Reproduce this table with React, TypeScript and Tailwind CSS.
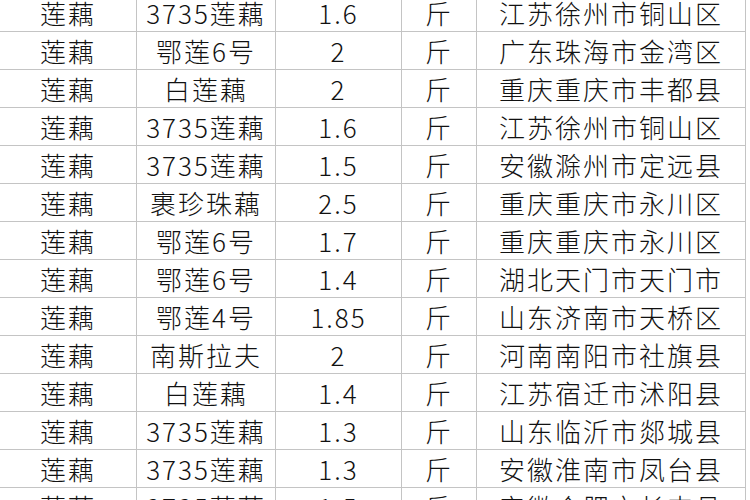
const rows: [string, string, string, string, string][] = [
  ['莲藕', '3735莲藕', '1.6', '斤', '江苏徐州市铜山区'],
  ['莲藕', '鄂莲6号', '2', '斤', '广东珠海市金湾区'],
  ['莲藕', '白莲藕', '2', '斤', '重庆重庆市丰都县'],
  ['莲藕', '3735莲藕', '1.6', '斤', '江苏徐州市铜山区'],
  ['莲藕', '3735莲藕', '1.5', '斤', '安徽滁州市定远县'],
  ['莲藕', '裹珍珠藕', '2.5', '斤', '重庆重庆市永川区'],
  ['莲藕', '鄂莲6号', '1.7', '斤', '重庆重庆市永川区'],
  ['莲藕', '鄂莲6号', '1.4', '斤', '湖北天门市天门市'],
  ['莲藕', '鄂莲4号', '1.85', '斤', '山东济南市天桥区'],
  ['莲藕', '南斯拉夫', '2', '斤', '河南南阳市社旗县'],
  ['莲藕', '白莲藕', '1.4', '斤', '江苏宿迁市沭阳县'],
  ['莲藕', '3735莲藕', '1.3', '斤', '山东临沂市郯城县'],
  ['莲藕', '3735莲藕', '1.3', '斤', '安徽淮南市凤台县'],
  ['莲藕', '3735莲藕', '1.5', '斤', '安徽合肥市长丰县'],
]

export default function App() {
  return (
    <div className="w-[750px] h-[500px] overflow-hidden bg-white">
      <div
        className="-mt-[6px] w-[746px] text-[#111] text-[26px] font-light tracking-[2px]"
        style={{ fontFamily: '"Noto Sans CJK SC", "Noto Sans", sans-serif' }}
      >
        {rows.map((r, i) => (
          <div key={i} className="grid grid-cols-[137px_139px_126px_75px_269px] h-[38px] border-b border-[#c4c4c4]">
            {r.map((c, j) => (
              <div key={j} className="flex items-center justify-center border-r border-[#c4c4c4] leading-none whitespace-nowrap">
                {c}
              </div>
            ))}
          </div>
        ))}
      </div>
    </div>
  )
}
